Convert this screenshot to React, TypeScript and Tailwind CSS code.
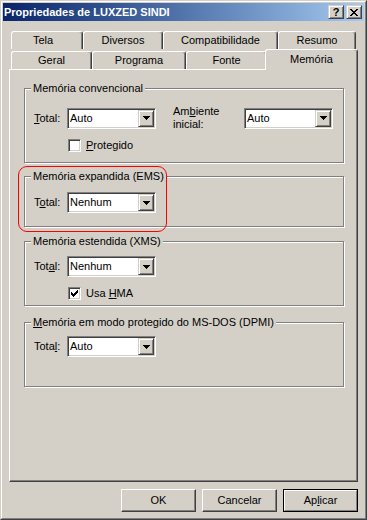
import React from "react"

const bevel =
  "border border-t-[#d4d0c8] border-l-[#d4d0c8] border-r-[#404040] border-b-[#404040] shadow-[inset_1px_1px_0_#ffffff,inset_-1px_-1px_0_#808080]"
const sunken =
  "border border-t-[#808080] border-l-[#808080] border-r-white border-b-white shadow-[inset_1px_1px_0_#404040,inset_-1px_-1px_0_#d4d0c8]"
const groupBox =
  "relative w-[320px] border border-[#808080] shadow-[inset_1px_1px_0_#ffffff,1px_1px_0_#ffffff]"
const tabBase =
  "flex h-[18px] shrink-0 items-center justify-center rounded-t-[3px] border border-b-0 border-t-white border-l-white border-r-[#404040] shadow-[inset_-1px_0_0_#808080]"

const Arrow = () => (
  <svg width="7" height="4" viewBox="0 0 7 4" shapeRendering="crispEdges">
    <path d="M0 0h7v1h-7z M1 1h5v1h-5z M2 2h3v1h-3z M3 3h1v1h-1z" fill="#000" />
  </svg>
)

const Combo = ({ value }: { value: string }) => (
  <div className={`flex h-[21px] w-[89px] shrink-0 bg-white p-px ${sunken}`}>
    <span className="flex-1 pl-px leading-[17px]">{value}</span>
    <span className={`flex h-[17px] w-[16px] items-center justify-center bg-[#d4d0c8] ${bevel}`}>
      <Arrow />
    </span>
  </div>
)

const CheckBox = ({ checked }: { checked?: boolean }) => (
  <span className={`flex h-[13px] w-[13px] shrink-0 items-center justify-center bg-white ${sunken}`}>
    {checked && (
      <svg width="7" height="7" viewBox="0 0 7 7" shapeRendering="crispEdges">
        <path
          d="M6 0h1v1h-1z M5 1h2v1h-2z M0 2h1v1h-1z M4 2h3v1h-3z M0 3h2v1h-2z M3 3h3v1h-3z M0 4h5v1h-5z M1 5h3v1h-3z M2 6h1v1h-1z"
          fill="#000"
        />
      </svg>
    )}
  </span>
)

const GroupLabel = ({ children }: { children: React.ReactNode }) => (
  <span className="absolute left-[6px] top-[-7px] bg-[#d4d0c8] px-[2px] leading-[13px]">{children}</span>
)

const u = "underline decoration-1 underline-offset-[1px]"

export default function App() {
  return (
    <div className="h-[520px] w-[367px] border border-t-[#d4d0c8] border-l-[#d4d0c8] border-r-[#404040] border-b-[#404040] bg-[#d4d0c8] font-['Liberation_Sans',Arial,sans-serif] text-[11px] text-black">
      <div className="flex h-full flex-col border border-t-white border-l-white border-r-[#808080] border-b-[#808080] p-px">
        {/* title bar */}
        <div className="flex h-[18px] shrink-0 items-center justify-between bg-linear-to-r from-[#0a246a] to-[#a6caf0] pl-[1px] pr-[2px]">
          <span className="font-bold text-white">Propriedades de LUXZED SINDI</span>
          <div className="flex gap-[2px]">
            <span className={`flex h-[14px] w-[16px] items-center justify-center bg-[#d4d0c8] text-[11px] font-bold leading-none ${bevel}`}>
              ?
            </span>
            <span className={`flex h-[14px] w-[16px] items-center justify-center bg-[#d4d0c8] ${bevel}`}>
              <svg width="8" height="7" viewBox="0 0 8 7" shapeRendering="crispEdges">
                <path
                  d="M0 0h2v1h-2z M6 0h2v1h-2z M1 1h2v1h-2z M5 1h2v1h-2z M2 2h4v1h-4z M3 3h2v1h-2z M2 4h4v1h-4z M1 5h2v1h-2z M5 5h2v1h-2z M0 6h2v1h-2z M6 6h2v1h-2z"
                  fill="#000"
                />
              </svg>
            </span>
          </div>
        </div>

        {/* client */}
        <div className="flex flex-1 flex-col px-[6px] pt-[10px]">
          <div className="mx-[2px] flex">
            <div className={`${tabBase} w-[72px] pr-[8px]`}>Tela</div>
            <div className={`${tabBase} w-[80px]`}>Diversos</div>
            <div className={`${tabBase} w-[115px]`}>Compatibilidade</div>
            <div className={`${tabBase} w-[78px]`}>Resumo</div>
          </div>
          <div className="mx-[2px] flex items-end">
            <div className={`${tabBase} w-[81px]`}>Geral</div>
            <div className={`${tabBase} w-[94px]`}>Programa</div>
            <div className={`${tabBase} w-[81px]`}>Fonte</div>
            <div className={`${tabBase} relative z-10 -mx-[2px] -mb-px h-[21px] w-[93px] bg-[#d4d0c8] pb-[2px]`}>
              Memória
            </div>
          </div>

          {/* panel */}
          <div className="flex h-[413px] flex-col border border-t-white border-l-white border-r-[#404040] border-b-[#404040] pl-[14px] pt-[18px] shadow-[inset_-1px_-1px_0_#808080]">
            <div className={`${groupBox} h-[75px]`}>
              <GroupLabel>Memória convencional</GroupLabel>
              <div className="flex items-center pl-[9px] pt-[16px]">
                <span className="w-[33px]">
                  <span className={u}>T</span>otal:
                </span>
                <Combo value="Auto" />
                <span className="ml-[17px] w-[71px] leading-[13px]">
                  Am<span className={u}>b</span>iente
                  <br />
                  inicial:
                </span>
                <Combo value="Auto" />
              </div>
              <div className="mt-[6px] flex items-center pl-[43px]">
                <CheckBox />
                <span className="ml-[5px]">
                  <span className={u}>P</span>rotegido
                </span>
              </div>
            </div>

            <div className={`${groupBox} mt-[13px] h-[51px]`}>
              <GroupLabel>Memória expandida (EMS)</GroupLabel>
              <div className="flex items-center pl-[9px] pt-[15px]">
                <span className="w-[33px]">
                  T<span className={u}>o</span>tal:
                </span>
                <Combo value="Nenhum" />
              </div>
              <div className="pointer-events-none absolute left-[-7px] top-[-11px] h-[66px] w-[149px] rounded-[9px] border border-[#ff0000]" />
            </div>

            <div className={`${groupBox} mt-[14px] h-[65px]`}>
              <GroupLabel>Memória estendida (XMS)</GroupLabel>
              <div className="flex items-center pl-[9px] pt-[14px]">
                <span className="w-[33px]">
                  Tot<span className={u}>a</span>l:
                </span>
                <Combo value="Nenhum" />
              </div>
              <div className="mt-[8px] flex items-center pl-[43px]">
                <CheckBox checked />
                <span className="ml-[5px]">
                  Usa <span className={u}>H</span>MA
                </span>
              </div>
            </div>

            <div className={`${groupBox} mt-[16px] h-[65px]`}>
              <GroupLabel>
                <span className={u}>M</span>emória em modo protegido do MS-DOS (DPMI)
              </GroupLabel>
              <div className="flex items-center pl-[9px] pt-[13px]">
                <span className="w-[33px]">
                  Tota<span className={u}>l</span>:
                </span>
                <Combo value="Auto" />
              </div>
            </div>
          </div>

          {/* buttons */}
          <div className="mt-[7px] flex justify-end gap-[6px]">
            <button className="flex h-[23px] w-[75px] items-center justify-center border border-t-white border-l-white border-r-[#404040] border-b-[#404040] bg-[#d4d0c8] shadow-[inset_-1px_-1px_0_#808080]">
              OK
            </button>
            <button className="flex h-[23px] w-[75px] items-center justify-center border border-t-white border-l-white border-r-[#404040] border-b-[#404040] bg-[#d4d0c8] shadow-[inset_-1px_-1px_0_#808080]">
              Cancelar
            </button>
            <button className="h-[23px] w-[75px] border border-black bg-[#d4d0c8]">
              <span className="flex h-full items-center justify-center border border-t-white border-l-white border-r-[#808080] border-b-[#808080]">
                Ap<span className={u}>l</span>icar
              </span>
            </button>
          </div>
        </div>
      </div>
    </div>
  )
}
